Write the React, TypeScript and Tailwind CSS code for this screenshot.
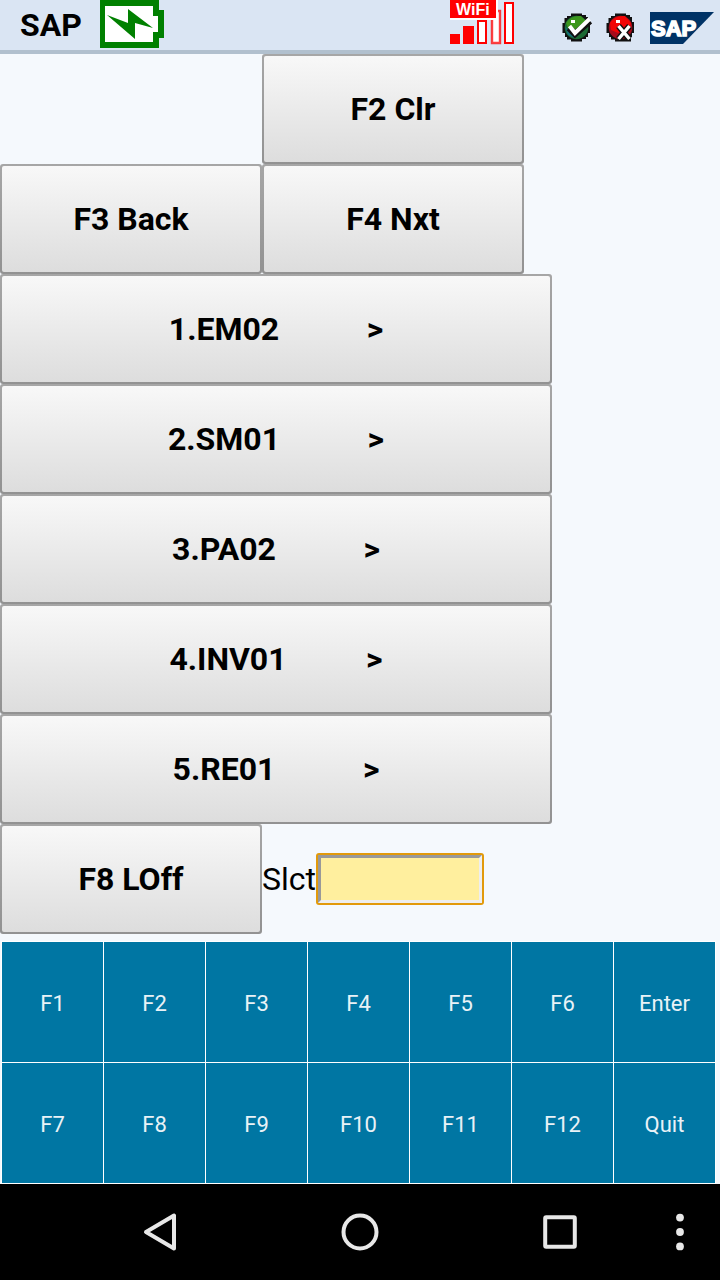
import React from "react";

const ROWS = ["1.EM02", "2.SM01", "3.PA02", "4.INV01", "5.RE01"];
const KEYS = [
  "F1", "F2", "F3", "F4", "F5", "F6", "Enter",
  "F7", "F8", "F9", "F10", "F11", "F12", "Quit",
];

function PushButton({ wide = false, children }: { wide?: boolean; children: React.ReactNode }) {
  return (
    <button
      type="button"
      className={
        (wide ? "w-[552px]" : "w-[262px]") +
        " h-[110px] shrink-0 whitespace-pre rounded-[3px] bg-linear-to-b from-[#a6a6a6] to-[#929292] p-0.5 text-[32px] font-bold text-black"
      }
    >
      <span className="flex h-full items-center justify-center rounded-[2px] bg-linear-to-b from-[#f8f8f8] to-[#dddddd]">
        {children}
      </span>
    </button>
  );
}

function BatteryIcon() {
  return (
    <svg width="64" height="48" viewBox="0 0 64 48" role="img" aria-label="Battery charging">
      <path d="M0 0H59V10H64V38H59V48H0Z" fill="#008000" />
      <path d="M5 6H53V16H58V32H53V42H5Z" fill="#fff" />
      <path d="M7 15L28 23V9L53 28L35 23V39Z" fill="#008000" />
    </svg>
  );
}

function WifiIcon() {
  return (
    <svg width="68" height="46" viewBox="0 0 68 46" role="img" aria-label="WiFi signal">
      <path d="M0 34H10V44H0ZM13 26H24V44H13Z" fill="#f00" />
      <g fill="#fff" stroke="#f00" strokeWidth="2">
        <path d="M28 21H36V43H28Z" />
        <path d="M42 11H50V43H42Z" strokeOpacity="0.75" strokeWidth="2.4" />
        <path d="M55 3H63V43H55Z" />
      </g>
      <path d="M0 0H48V20H0Z" fill="#fff" />
      <path d="M0 0H46V18H0Z" fill="#f00" />
      <text x="6" y="15" fill="#fff" fontFamily="'Liberation Sans', sans-serif" fontWeight="700" fontSize="16">
        WiFi
      </text>
    </svg>
  );
}

function OkIcon() {
  return (
    <svg width="30" height="30" viewBox="0 0 30 30" role="img" aria-label="Confirm">
      <path d="M9 0.5H20V2H24V4H26V9H28V20H26V24H24V26H20V28.5H9V26.5H5V24H3V20H0.5V10H2.5V5H5V3H9Z" fill="#111" />
      <circle cx="14.5" cy="14.5" r="11.8" fill="#1b6a34" />
      <path d="M4 10Q9 2 19 3L25 9L21 13Q13 14 12 19L6 15Z" fill="#3c961c" />
      <path d="M3 14L8 18L12 25L6 22Z" fill="#14707c" />
      <path d="M7 15L13 21L28 8" fill="none" stroke="#111" strokeWidth="6.5" />
      <path d="M7.500 13L13 20L27.500 6" fill="none" stroke="#fff" strokeWidth="4" />
      <path d="M9 7H13V10H9Z" fill="#fff" />
    </svg>
  );
}

function CancelIcon() {
  return (
    <svg width="30" height="30" viewBox="0 0 30 30" role="img" aria-label="Cancel">
      <path d="M9 0.5H20V2H24V4H26V9H28V20H26V24H25V28.5H9V26.5H5V24H3V20H0.500V10H2.500V5H5V3H9Z" fill="#111" />
      <circle cx="14.500" cy="14.500" r="11.8" fill="#a80b1a" />
      <path d="M4 10Q9 2 19 3L25 10L24 15L12 20L5 17Z" fill="#f20505" />
      <path d="M12.500 13L23.500 26M23.500 13L12.500 26" stroke="#111" strokeWidth="6" />
      <path d="M12.500 13L23.500 26M23.500 13L12.500 26" stroke="#fff" strokeWidth="3.4" />
      <path d="M10 7H14V10H10Z" fill="#fff" />
    </svg>
  );
}

function SapLogo() {
  return (
    <svg width="64" height="32" viewBox="0 0 64 32" role="img" aria-label="SAP">
      <path d="M0 0H64L33 32H0Z" fill="#003366" />
      <text
        x="1"
        y="24"
        fill="#fff"
        stroke="#fff"
        strokeWidth="1.6"
        fontFamily="'Liberation Sans', sans-serif"
        fontWeight="700"
        fontSize="22"
      >
        SAP
      </text>
    </svg>
  );
}

export default function App() {
  return (
    <div className="flex min-h-screen flex-col bg-[#f5f9fd] font-['Roboto',sans-serif] text-black">
      <header className="flex h-[54px] items-start justify-between border-b-4 border-[#b1c0ce] bg-[#dae5f3] pl-5 pr-1.5">
        <div className="flex items-start gap-[18px]">
          <h1 className="text-[32px] leading-[50px] font-bold">SAP</h1>
          <BatteryIcon />
        </div>
        <div className="flex items-start">
          <WifiIcon />
          <div className="flex items-center gap-3.5 pt-3 pl-11">
            <button type="button"><OkIcon /></button>
            <button type="button"><CancelIcon /></button>
            <SapLogo />
          </div>
        </div>
      </header>

      <main className="flex flex-1 flex-col">
        <div className="flex pl-[262px]">
          <PushButton>F2 Clr</PushButton>
        </div>
        <div className="flex">
          <PushButton>F3 Back</PushButton>
          <PushButton>F4 Nxt</PushButton>
        </div>
        {ROWS.map((row) => (
          <PushButton key={row} wide>{row.padEnd(17, " ") + ">"}</PushButton>
        ))}
        <div className="flex items-center">
          <PushButton>F8 LOff</PushButton>
          <label htmlFor="slct" className="text-[32px]">Slct</label>
          <div className="rounded-[3px] bg-[#e29a0b] p-0.5">
            <input
              id="slct"
              type="text"
              className="block h-12 w-[164px] border-3 border-t-[#999] border-r-[#eee] border-b-[#eee] border-l-[#999] bg-[#ffef9e] px-1 text-[32px] outline-none"
            />
          </div>
        </div>
      </main>

      <div className="grid grid-cols-7 gap-px pt-2 pr-[5px] pb-px pl-0.5">
        {KEYS.map((key) => (
          <button
            key={key}
            type="button"
            className="h-[120px] bg-[#0076a3] pt-0.5 text-[22px] text-[#e9f2f7] outline outline-white"
          >
            {key}
          </button>
        ))}
      </div>

      <nav className="flex h-24 items-center bg-black pr-5 pl-15 text-[#e8e8e8]">
        <button type="button" aria-label="Back" className="flex flex-1 justify-center">
          <svg width="40" height="40" viewBox="0 0 40 40" fill="none" stroke="currentColor" strokeWidth="4" strokeLinejoin="round">
            <path d="M34 3.5V36.5L6 20Z" />
          </svg>
        </button>
        <button type="button" aria-label="Home" className="flex flex-1 justify-center">
          <svg width="40" height="40" viewBox="0 0 40 40" fill="none" stroke="currentColor" strokeWidth="4">
            <circle cx="20" cy="20" r="16.5" />
          </svg>
        </button>
        <button type="button" aria-label="Recent apps" className="flex flex-1 justify-center">
          <svg width="40" height="40" viewBox="0 0 40 40" fill="none" stroke="currentColor" strokeWidth="4">
            <rect x="5.2" y="5.2" width="29.6" height="29.6" rx="1" />
          </svg>
        </button>
        <button type="button" aria-label="More options" className="flex w-10 justify-center">
          <svg width="40" height="40" viewBox="0 0 40 40" fill="currentColor">
            <circle cx="20" cy="5.6" r="3.9" />
            <circle cx="20" cy="20" r="3.9" />
            <circle cx="20" cy="34.4" r="3.9" />
          </svg>
        </button>
      </nav>
    </div>
  );
}
